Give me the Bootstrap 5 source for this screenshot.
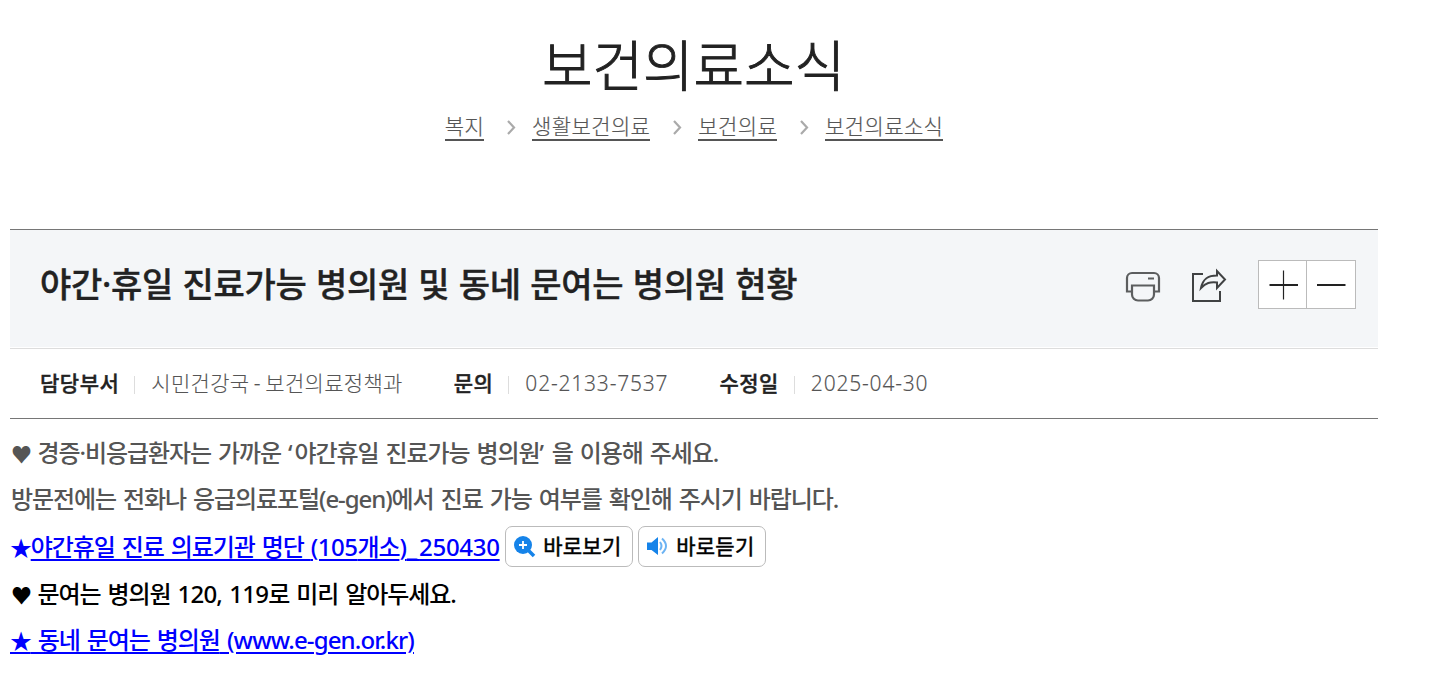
<!DOCTYPE html>
<html lang="ko">
<head>
<meta charset="utf-8">
<title>보건의료소식</title>
<link href="https://cdn.jsdelivr.net/npm/bootstrap@5.3.0/dist/css/bootstrap.min.css" rel="stylesheet">
<style>
body{font-family:"Noto Sans","Noto Sans CJK KR",sans-serif;color:#222;background:#fff;overflow:hidden}
.page{width:1368px;margin-left:10px}
.page-title{font-size:55px;font-weight:300;letter-spacing:-.1px;line-height:68px;height:70px;margin-top:31px;padding-right:1px;-webkit-text-stroke:.9px #222}
.crumbs{height:34px;margin-top:9px;font-size:21px;font-weight:300;letter-spacing:.38px;color:#555;-webkit-text-stroke:.2px #555}
.crumbs a{color:#555;text-decoration:none;border-bottom:2px solid #555;height:31px;line-height:32px;white-space:nowrap}
.crumbs svg{margin:4px 16px 0 23px}
.post-head{height:120px;margin-top:85px;border-top:1px solid #767676;border-bottom:1px solid #ddd;background:#f4f6f8;padding:30px 22px 0 30px;box-shadow:inset 0 -1px #fff}
.post-title{font-size:34px;font-weight:500;letter-spacing:-.28px;word-spacing:.9px;line-height:48px;margin:0;white-space:nowrap;-webkit-text-stroke:.4px #222}
.zoomer{width:98px;height:49px;border:1px solid #bbb;background:#fff}
.zoomer button{border:0;background:#fff;padding:0;width:49px;height:47px}
.zoomer button:first-child{width:47px;padding-left:2px}
.zoomer button+button{border-left:1px solid #bbb}
.meta{height:70px;border-bottom:1px solid #767676;padding-left:30px;font-size:21px;letter-spacing:.3px}
.meta b{font-weight:500;letter-spacing:.5px;-webkit-text-stroke:.4px #222}
.meta span{font-weight:300;color:#555;-webkit-text-stroke:.1px #555}
.meta .digits{letter-spacing:.8px}
.meta .dept{word-spacing:-1.3px}
.meta i{width:1px;height:18px;background:#ddd;margin:2px 16px 0 15px}
.post{padding-top:11px;font-size:24px;font-weight:500;letter-spacing:-1.08px;word-spacing:1.85px;color:#555}
.post>div{height:46px;line-height:46px;white-space:pre}
.post>.tall{height:49px}
.post a{color:#00f;text-decoration:underline;text-decoration-thickness:2px;text-underline-offset:3px;text-decoration-skip-ink:auto}
.heart{font-size:21px;letter-spacing:-1.500px;margin-left:1px}
.star{font-size:22px;letter-spacing:-1.300px}
.quick{width:128px;height:41px;border:1px solid #bbb;border-radius:7px;background:#fff;color:#000;font-size:21px;letter-spacing:.3px;line-height:39px;padding-left:8px;-webkit-text-stroke:.5px #000}
.quick svg{margin-right:7.500px}
</style>
</head>
<body>
<main class="page">
<h1 class="page-title text-center mb-0">보건의료소식</h1>
<nav class="crumbs d-flex justify-content-center">
<a href="#">복지</a><svg width="9" height="26" viewBox="0 0 9 26" fill="none" stroke="#aaa" stroke-width="2.200"><path d="M1 7l6 6.500-6 6.500"/></svg>
<a href="#">생활보건의료</a><svg width="9" height="26" viewBox="0 0 9 26" fill="none" stroke="#aaa" stroke-width="2.200"><path d="M1 7l6 6.500-6 6.500"/></svg>
<a href="#">보건의료</a><svg width="9" height="26" viewBox="0 0 9 26" fill="none" stroke="#aaa" stroke-width="2.200"><path d="M1 7l6 6.500-6 6.500"/></svg>
<a href="#">보건의료소식</a>
</nav>
<header class="post-head d-flex align-items-start">
<h2 class="post-title">야간·휴일 진료가능 병의원 및 동네 문여는 병의원 현황</h2>
<div class="ms-auto d-flex">
<svg width="36" height="49" viewBox="0 0 36 49" fill="none" stroke="#5c5e5f" stroke-width="2.200" style="margin-right:30px"><path d="M7 31.500H2V18a5 5 0 0 1 5-5h22a5 5 0 0 1 5 5v13.500H29"/><path d="M7 25.500h22V34.500a6 6 0 0 1-6 6h-10a6 6 0 0 1-6-6z M23 18.500h6"/></svg>
<svg width="36" height="49" viewBox="0 0 36 49" fill="none" stroke="#404243" stroke-width="2" style="margin-right:31px"><path d="M12 14H2v27h27V31"/><path d="M10 28c2-10 8-12.500 16-12.500V11l8 8.500L26 28v-5.500c-7-.5-11 0-16 5.500z"/></svg>
<div class="zoomer d-flex"><button aria-label="확대"><svg width="30" height="30" viewBox="0 0 30 30" stroke="#222" class="d-block mx-auto"><path stroke-width="1.200" d="M14.500 .5v29"/><path stroke-width="2" d="M.500 15h28.500"/></svg></button><button aria-label="축소"><svg width="30" height="30" viewBox="0 0 30 30" stroke="#222" class="d-block mx-auto"><path stroke-width="2" d="M1 15h28.500"/></svg></button></div>
</div>
</header>
<div class="meta d-flex align-items-center">
<b>담당부서</b><i></i><span class="dept">시민건강국 - 보건의료정책과</span>
<b style="margin-left:51px">문의</b><i></i><span class="digits">02-2133-7537</span>
<b style="margin-left:51px">수정일</b><i></i><span class="digits">2025-04-30</span>
</div>
<section class="post">
<div><span class="heart">♥</span> 경증·비응급환자는 가까운 <span style="letter-spacing:2px">‘</span>야간휴일 진료가능 병의원<span style="letter-spacing:.8px">’</span> 을 이용해 주세요.</div>
<div style="padding-left:1px">방문전에는 전화나 응급의료포털(e-gen)에서 진료 가능 여부를 확인해 주시기 바랍니다.</div>
<div class="tall d-flex align-items-center"><span class="star" style="color:#00f">★</span><a href="#">야간휴일 진료 의료기관 명단 <span style="letter-spacing:-.5px">(105</span>개소<span style="letter-spacing:-.300px">)<span style="letter-spacing:2px">_</span>250430</span></a><button class="quick d-flex align-items-center" style="margin-left:5px"><svg width="22" height="22" viewBox="0 0 22 22"><circle cx="9" cy="9" r="9" fill="#1583e9"/><path d="M14 14l6 6" stroke="#1583e9" stroke-width="3.500"/><path d="M9 5v8M5 9h8" stroke="#fff" stroke-width="1.800"/></svg>바로보기</button><button class="quick d-flex align-items-center" style="margin-left:5px"><svg width="22" height="22" viewBox="0 0 22 22" fill="none"><path d="M0 6.500h4.500L11 1v18l-6.500-5H0z" fill="#1583e9"/><path d="M13 6q3 4 0 8M15 2.500q8 7.500 0 15" stroke="#6cb3f3" stroke-width="2"/></svg>바로듣기</button></div>
<div style="color:#000"><span class="heart">♥</span> 문여는 병의원 <span style="letter-spacing:-.8px">120, 119</span>로 미리 알아두세요.</div>
<div><a href="#"><span class="star">★</span> 동네 문여는 병의원<span style="letter-spacing:-.85px"> (www.e-gen.or.kr)</span></a></div>
</section>
</main>
<script src="https://cdn.jsdelivr.net/npm/bootstrap@5.3.0/dist/js/bootstrap.bundle.min.js"></script>
</body>
</html>
